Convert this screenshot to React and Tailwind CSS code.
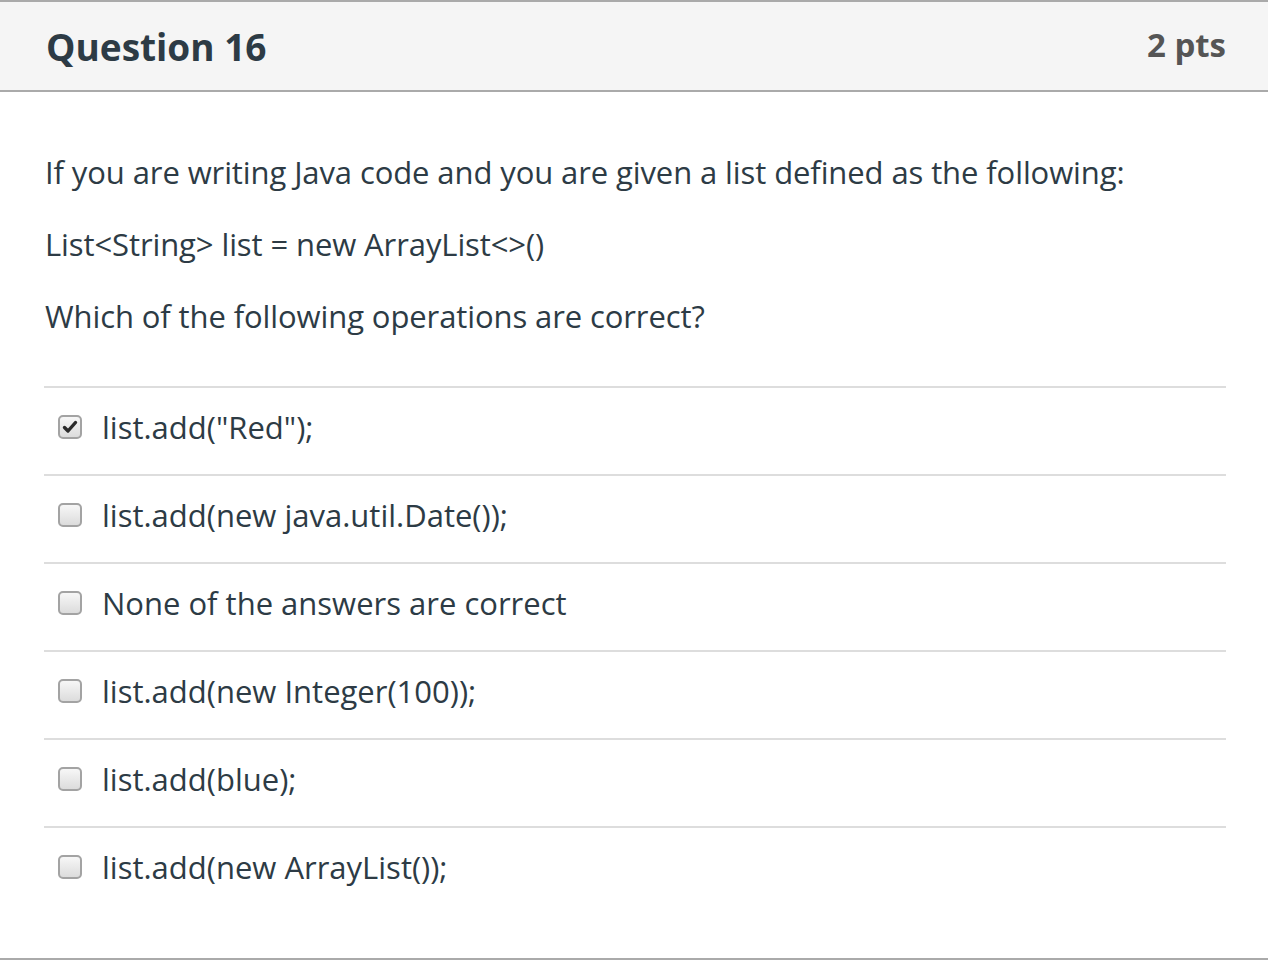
import React from 'react';

const answers = [
  { label: 'list.add("Red");', checked: true },
  { label: 'list.add(new java.util.Date());', checked: false },
  { label: 'None of the answers are correct', checked: false },
  { label: 'list.add(new Integer(100));', checked: false },
  { label: 'list.add(blue);', checked: false },
  { label: 'list.add(new ArrayList());', checked: false },
];

const Box = ({ checked }) => (
  <span className="w-[24px] h-[24px] rounded-[5px] border-2 border-[#a3a3a3] bg-gradient-to-b from-[#f7f7f7] to-[#dcdcdc] flex items-center justify-center shrink-0">
    {checked && (
      <svg width="16" height="14" viewBox="0 0 16 14">
        <path d="M2.5 7.5 L6 11 L13.5 2.5" fill="none" stroke="#2b2b2b" strokeWidth="3.4" strokeLinecap="round" strokeLinejoin="round" />
      </svg>
    )}
  </span>
);

const App = () => {
  return (
    <div className="w-[1268px] h-[960px] bg-white text-[#2d3b45] font-['Open_Sans',sans-serif] flex flex-col">
      <div className="h-[92px] bg-[#f5f5f5] border-y-2 border-[#aaaaaa] pl-[46px] pr-[42px] flex justify-between items-start">
        <h2 className="text-[37px] font-bold leading-none mt-[26px]">Question 16</h2>
        <span className="text-[33px] font-bold leading-none text-[#555555] mt-[26px]">2 pts</span>
      </div>

      <div className="flex-1 pl-[44px] pr-[42px] pt-[58px] border-b-2 border-[#aaaaaa]">
        <div className="px-[1px] text-[31px] leading-[44px] tracking-[-0.1px]">
          <p className="mb-[28px]">If you are writing Java code and you are given a list defined as the following:</p>
          <p className="mb-[28px]">List&lt;String&gt; list = new ArrayList&lt;&gt;()</p>
          <p>Which of the following operations are correct?</p>
        </div>

        <div className="mt-[48px]">
          {answers.map((a, i) => (
            <label key={i} className="h-[88px] border-t-2 border-[#dddddd] flex items-center pl-[14px] pb-[8px] gap-[20px] text-[31px]">
              <Box checked={a.checked} />
              <span>{a.label}</span>
            </label>
          ))}
        </div>
      </div>
    </div>
  );
};

export default App;
